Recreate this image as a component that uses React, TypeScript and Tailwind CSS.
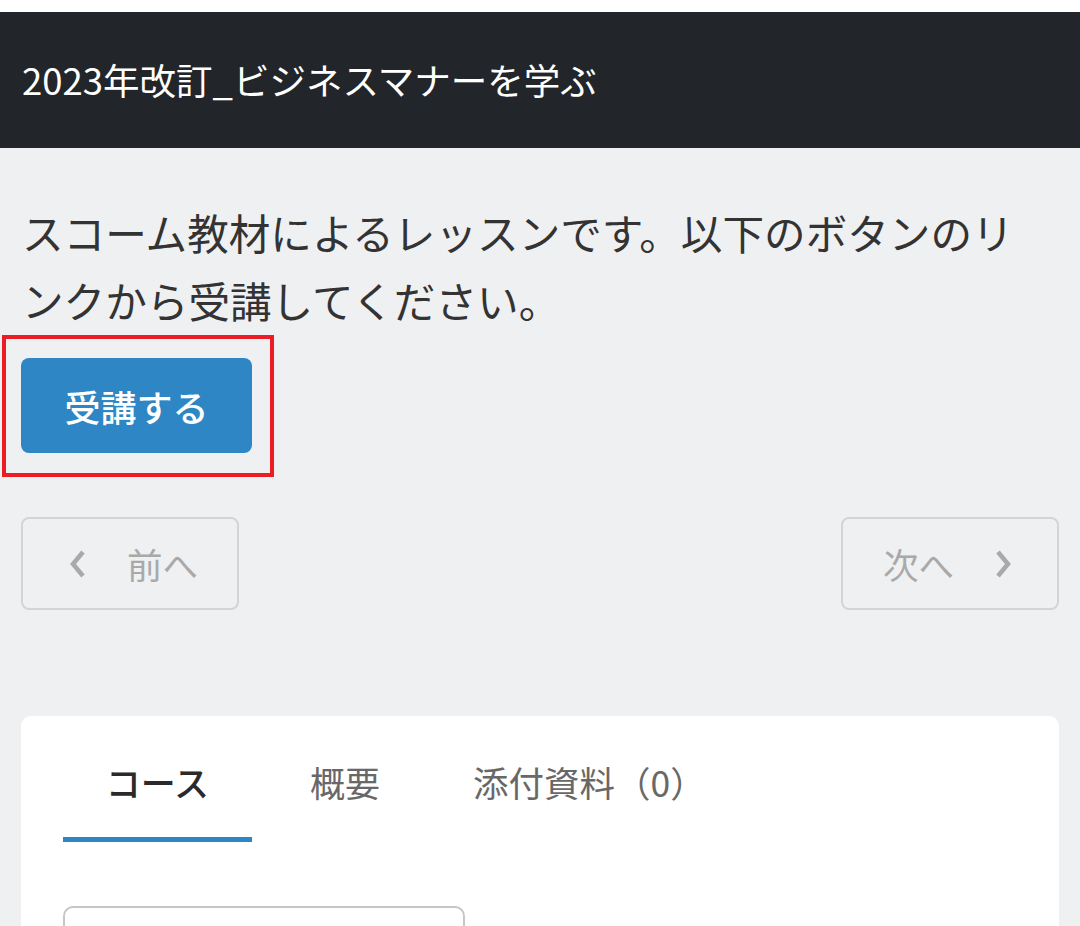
import React from "react";

function Chevron({ dir }: { dir: "left" | "right" }) {
  return (
    <svg width="18" height="30" viewBox="0 0 18 30" className="shrink-0">
      {dir === "left" ? (
        <path d="M14 3 L4 15 L14 27" fill="none" stroke="#a9a9a9" strokeWidth="4.5" />
      ) : (
        <path d="M4 3 L14 15 L4 27" fill="none" stroke="#a9a9a9" strokeWidth="4.5" />
      )}
    </svg>
  );
}

export default function App() {
  return (
    <div className="min-h-[926px] overflow-hidden bg-[#eff0f2] font-['Noto_Sans_CJK_JP','Noto_Sans',sans-serif]">
      <div className="h-[12px] bg-white" />
      <header className="flex h-[136px] items-center bg-[#222529] px-[22px]">
        <h1 className="text-[36.5px] font-normal leading-none text-white">2023年改訂_ビジネスマナーを学ぶ</h1>
      </header>
      <main className="px-[21px]">
        <p className="mt-[50px] pl-[1px] text-[41.6px] leading-[68px] text-[#333333] w-[1030px]">
          スコーム教材によるレッスンです。以下のボタンのリンクから受講してください。
        </p>
        <div className="relative mt-[24px] w-[231px]">
          <button className="flex h-[95px] w-[231px] items-center justify-center rounded-[8px] bg-[#2e86c5] text-[36px] font-medium text-white">
            受講する
          </button>
          <div className="pointer-events-none absolute left-[-19px] top-[-23px] h-[142px] w-[272px] border-[4px] border-[#ec1c24]" />
        </div>
        <div className="mt-[64px] flex justify-between">
          <button className="flex h-[93px] w-[218px] items-center rounded-[8px] border-2 border-[#d3d4d6] pl-[46px] text-[35.5px] text-[#a9a9a9]">
            <Chevron dir="left" />
            <span className="ml-[40px]">前へ</span>
          </button>
          <button className="flex h-[93px] w-[218px] items-center rounded-[8px] border-2 border-[#d3d4d6] pl-[40px] text-[35.5px] text-[#a9a9a9]">
            <span>次へ</span>
            <span className="ml-[40px] flex">
              <Chevron dir="right" />
            </span>
          </button>
        </div>
        <section className="mt-[106px] h-[300px] rounded-[10px] bg-white px-[42px] pt-[40px]">
          <div className="flex items-start text-[35px]">
            <div className="w-[189px] border-b-[5px] border-[#2e86c5] pb-[29px] text-center leading-[52px] font-medium text-[#2a2a2a]">
              コース
            </div>
            <div className="ml-[58px] leading-[52px] text-[#686868]">概要</div>
            <div className="ml-[93px] text-[35.5px] leading-[52px] text-[#686868]">添付資料（0）</div>
          </div>
          <div className="mt-[64px] h-[200px] w-[402px] rounded-[10px] border-2 border-[#c6c6c6]" />
        </section>
      </main>
    </div>
  );
}
